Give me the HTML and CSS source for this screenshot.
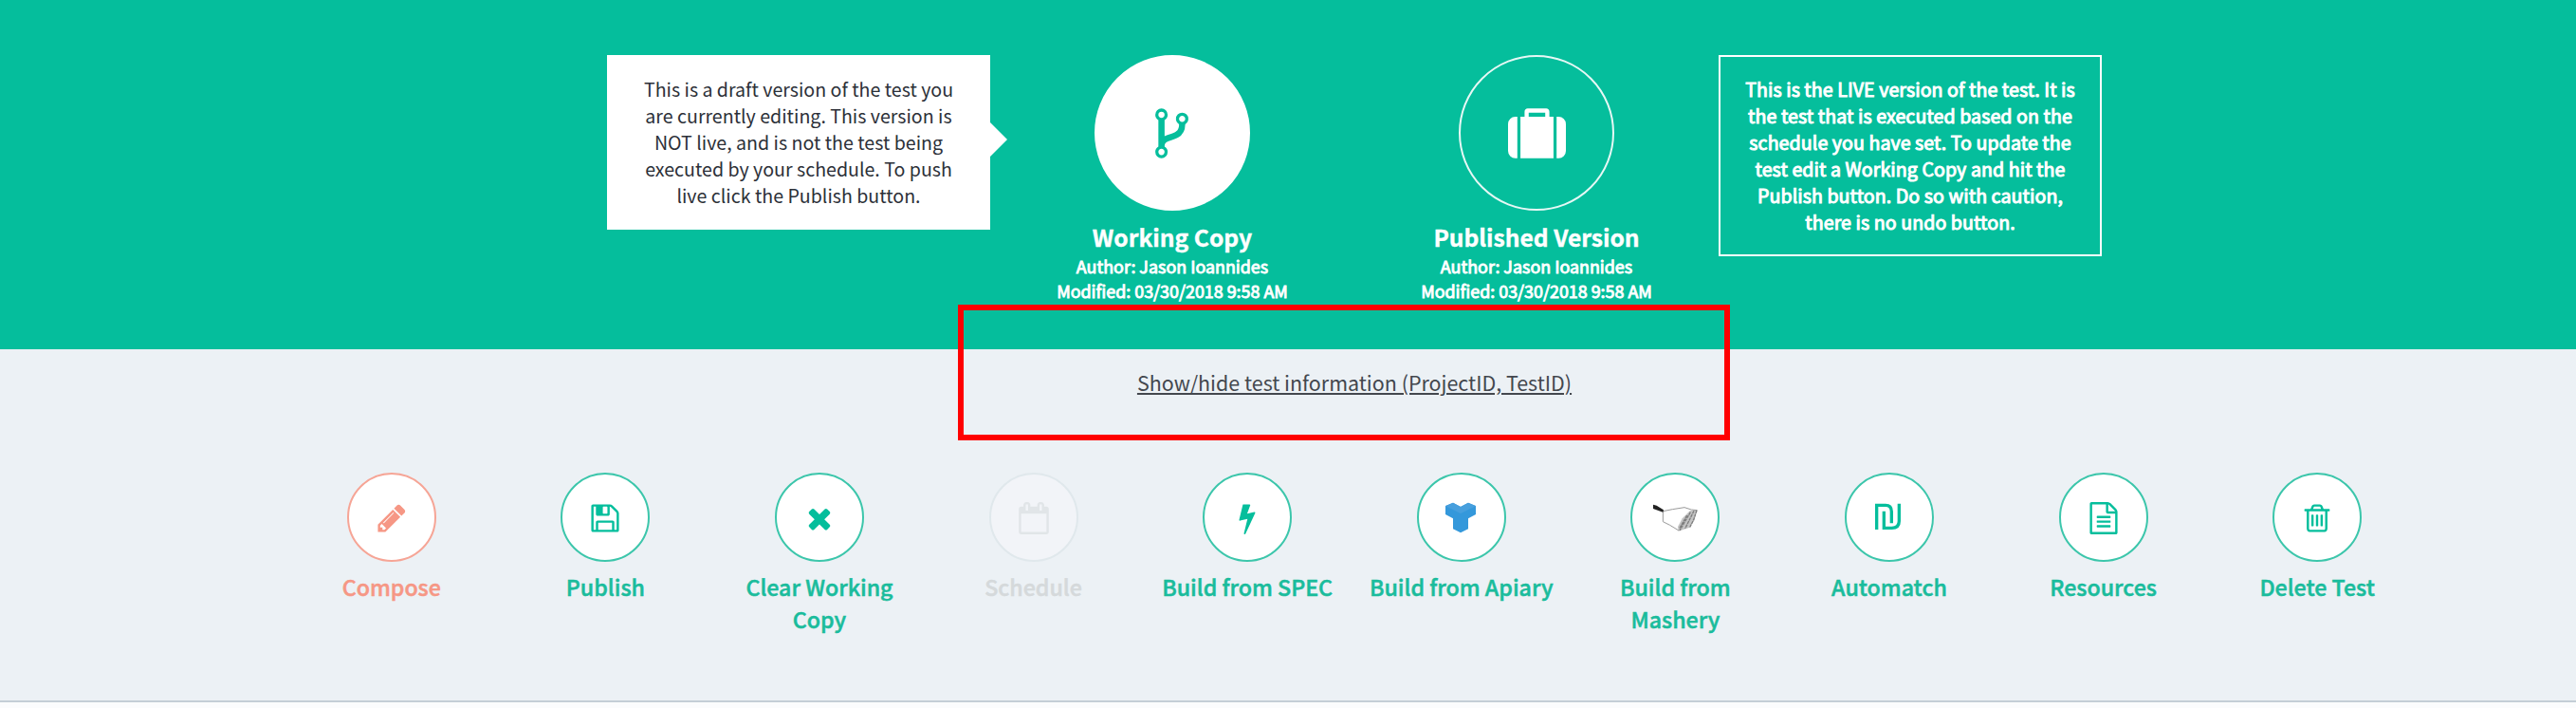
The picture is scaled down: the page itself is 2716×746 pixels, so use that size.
FILE: index.html
```
<!DOCTYPE html>
<html lang="en">
<head>
<meta charset="utf-8">
<title>Test versions</title>
<link rel="stylesheet" href="styles.css">
</head>
<body>
<header class="hero">
  <div class="note note-draft">This is a draft version of the test you<br>are currently editing. This version is<br>NOT live, and is not the test being<br>executed by your schedule. To push<br>live click the Publish button.</div>
  <div class="version">
    <div class="disc disc-solid"><svg class="icon-lg" viewBox="0 0 1792 1792"><path d="M672 1472q0-40-28-68t-68-28-68 28-28 68 28 68 68 28 68-28 28-68zm0-1152q0-40-28-68t-68-28-68 28-28 68 28 68 68 28 68-28 28-68zm640 128q0-40-28-68t-68-28-68 28-28 68 28 68 68 28 68-28 28-68zm96 0q0 52-26 96.500t-70 69.500q-2 287-226 414-67 38-203 81-128 40-169.500 71t-41.500 100v26q44 25 70 69.500t26 96.500q0 80-56 136t-136 56-136-56-56-136q0-52 26-96.500t70-69.500v-820q-44-25-70-69.500t-26-96.500q0-80 56-136t136-56 136 56 56 136q0 52-26 96.500t-70 69.500v497q54-26 154-57 55-17 87.500-29.500t70.500-31 59-39.500 40.500-51 28-69.500 8.500-91.500q-44-25-70-69.500t-26-96.500q0-80 56-136t136-56 136 56 56 136z"/></svg></div>
    <h2 class="version-name">Working Copy</h2>
    <p class="version-meta">Author: Jason Ioannides<br>Modified: 03/30/2018 9:58 AM</p>
  </div>
  <div class="version">
    <div class="disc"><svg class="icon-lg" viewBox="0 0 1792 1792"><path d="M640 384h512v-128h-512v128zm-352 0v1280h-64q-92 0-158-66t-66-158v-832q0-92 66-158t158-66h64zm1120 0v1280h-1024v-1280h128v-160q0-40 28-68t68-28h576q40 0 68 28t28 68v160h128zm384 224v832q0 92-66 158t-158 66h-64v-1280h64q92 0 158 66t66 158z"/></svg></div>
    <h2 class="version-name">Published Version</h2>
    <p class="version-meta">Author: Jason Ioannides<br>Modified: 03/30/2018 9:58 AM</p>
  </div>
  <div class="note note-live">This is the LIVE version of the test. It is<br>the test that is executed based on the<br>schedule you have set. To update the<br>test edit a Working Copy and hit the<br>Publish button. Do so with caution,<br>there is no undo button.</div>
</header>
<main class="panel">
  <a class="toggle">Show/hide test information (ProjectID, TestID)</a>
  <nav class="actions">
    <div class="action action-active">
      <div class="ring"><svg class="icon" viewBox="0 0 1792 1792"><path d="M491 1536l91-91-235-235-91 91v107h128v128h107zm523-928q0-22-22-22-10 0-17 7l-542 542q-7 7-7 17 0 22 22 22 10 0 17-7l542-542q7-7 7-17zm-54-192l416 416-832 832h-416v-416zm683 96q0 53-37 90l-166 166-416-416 166-165q36-38 90-38 53 0 91 38l235 234q37 39 37 91z"/></svg></div>
      <span class="label">Compose</span>
    </div>
    <div class="action">
      <div class="ring"><svg class="icon" viewBox="0 0 1792 1792"><path d="M512 1536h768v-384h-768v384zm896 0h128v-896q0-14-10-38.500t-20-34.500l-281-281q-10-10-34-20t-39-10v416q0 40-28 68t-68 28h-576q-40 0-68-28t-28-68v-416h-128v1280h128v-416q0-40 28-68t68-28h832q40 0 68 28t28 68v416zm-384-928v-320q0-13-9.500-22.500t-22.500-9.500h-192q-13 0-22.500 9.500t-9.500 22.500v320q0 13 9.500 22.500t22.500 9.500h192q13 0 22.500-9.500t9.500-22.500zm640 32v928q0 40-28 68t-68 28h-1344q-40 0-68-28t-28-68v-1344q0-40 28-68t68-28h928q40 0 88 20t76 48l280 280q28 28 48 76t20 88z"/></svg></div>
      <span class="label">Publish</span>
    </div>
    <div class="action">
      <div class="ring"><svg class="icon" viewBox="0 0 1792 1792"><path d="M1490 1322q0 40-28 68l-136 136q-28 28-68 28t-68-28l-294-294-294 294q-28 28-68 28t-68-28l-136-136q-28-28-28-68t28-68l294-294-294-294q-28-28-28-68t28-68l136-136q28-28 68-28t68 28l294 294 294-294q28-28 68-28t68 28l136 136q28 28 28 68t-28 68l-294 294 294 294q28 28 28 68z"/></svg></div>
      <span class="label">Clear Working Copy</span>
    </div>
    <div class="action action-disabled">
      <div class="ring"><svg class="icon" viewBox="0 0 1792 1792"><path d="M192 1664h1408v-1024h-1408v1024zm384-1216v-288q0-14-9-23t-23-9h-64q-14 0-23 9t-9 23v288q0 14 9 23t23 9h64q14 0 23-9t9-23zm768 0v-288q0-14-9-23t-23-9h-64q-14 0-23 9t-9 23v288q0 14 9 23t23 9h64q14 0 23-9t9-23zm384-64v1280q0 52-38 90t-90 38h-1408q-52 0-90-38t-38-90v-1280q0-52 38-90t90-38h128v-96q0-66 47-113t113-47h64q66 0 113 47t47 113v96h384v-96q0-66 47-113t113-47h64q66 0 113 47t47 113v96h128q52 0 90 38t38 90z"/></svg></div>
      <span class="label">Schedule</span>
    </div>
    <div class="action">
      <div class="ring"><svg class="icon" viewBox="0 0 1792 1792"><path d="M1333 566q18 20 7 44l-540 1157q-13 25-42 25-4 0-14-2-17-5-25.500-19t-4.500-30l197-808-406 101q-4 1-12 1-18 0-31-11-18-15-13-39l201-825q4-14 16-23t28-9h328q19 0 32 12.500t13 29.500q0 8-5 18l-171 463 396-98q8-2 12-2 19 0 34 15z"/></svg></div>
      <span class="label">Build from SPEC</span>
    </div>
    <div class="action">
      <div class="ring"><svg class="icon-wide" viewBox="0 0 270 180"><path fill="#3498db" d="M84 54l24-10 24 13 24-13 24 10v27l-24 13v33l-24 12-24-12v-33l-24-13z"/><path fill="#479fdd" d="M84 55l24-11 24 13 24-13 24 11-24 11-24 12-24-12z"/></svg></div>
      <span class="label">Build from Apiary</span>
    </div>
    <div class="action">
      <div class="ring"><svg class="icon-wide" viewBox="0 0 270 180"><path fill="#c4c4c4" d="M206 66l-10 34-14 22-36 12-2-14 14-26 24-24z"/><g fill="none" stroke-linejoin="round"><path stroke="#999" stroke-width="3" d="M97 71l30-6 38-6 22 7 18 2M97 71v33l22 11 28 17"/><path stroke="#7d7d7d" stroke-width="4" stroke-dasharray="10 2" d="M204 68l-10 30-12 24M195 70l-28 56M184 74l-34 58M173 84l-24 42"/></g><path fill="#222" d="M66 50l11 3 22 14-2 7-31-11z"/></svg></div>
      <span class="label">Build from Mashery</span>
    </div>
    <div class="action">
      <div class="ring"><svg class="icon-wide" viewBox="0 0 270 180"><g fill="none" stroke="currentColor" stroke-width="10"><path d="M95 129V52h28q19 0 19 20v37"/><path d="M118 71v53h25q23 0 23-22V47"/></g></svg></div>
      <span class="label">Automatch</span>
    </div>
    <div class="action">
      <div class="ring"><svg class="icon" viewBox="0 0 1792 1792"><path d="M1596 380q28 28 48 76t20 88v1152q0 40-28 68t-68 28h-1344q-40 0-68-28t-28-68v-1600q0-40 28-68t68-28h896q40 0 88 20t76 48zm-444-244v376h376q-10-29-22-41l-313-313q-12-12-41-22zm384 1528v-1024h-416q-40 0-68-28t-28-68v-416h-768v1536h1280zm-1024-864q0-14 9-23t23-9h704q14 0 23 9t9 23v64q0 14-9 23t-23 9h-704q-14 0-23-9t-9-23v-64zm736 224q14 0 23 9t9 23v64q0 14-9 23t-23 9h-704q-14 0-23-9t-9-23v-64q0-14 9-23t23-9h704zm0 256q14 0 23 9t9 23v64q0 14-9 23t-23 9h-704q-14 0-23-9t-9-23v-64q0-14 9-23t23-9h704z"/></svg></div>
      <span class="label">Resources</span>
    </div>
    <div class="action">
      <div class="ring"><svg class="icon" viewBox="0 0 1792 1792"><path d="M704 736v576q0 14-9 23t-23 9h-64q-14 0-23-9t-9-23v-576q0-14 9-23t23-9h64q14 0 23 9t9 23zm256 0v576q0 14-9 23t-23 9h-64q-14 0-23-9t-9-23v-576q0-14 9-23t23-9h64q14 0 23 9t9 23zm256 0v576q0 14-9 23t-23 9h-64q-14 0-23-9t-9-23v-576q0-14 9-23t23-9h64q14 0 23 9t9 23zm128 724v-948h-896v948q0 22 7 40.500t14.500 27 10.500 8.500h832q3 0 10.500-8.500t14.500-27 7-40.500zm-672-1076h448l-48-117q-7-9-17-11h-317q-10 2-17 11zm928 32v64q0 14-9 23t-23 9h-96v948q0 83-47 143.500t-113 60.500h-832q-66 0-113-58.500t-47-141.500v-952h-96q-14 0-23-9t-9-23v-64q0-14 9-23t23-9h309l70-167q15-37 54-63t79-26h320q40 0 79 26t54 63l70 167h309q14 0 23 9t9 23z"/></svg></div>
      <span class="label">Delete Test</span>
    </div>
  </nav>
</main>
<div class="highlight"></div>
</body>
</html>
```
FILE: styles.css
```
* { box-sizing: border-box; }

body {
  position: relative;
  margin: 0;
  height: 746px;
  overflow: hidden;
  background: #fbfcfd;
  font-family: "Noto Sans CJK SC", "Open Sans", sans-serif;
}

.hero {
  display: flex;
  align-items: flex-start;
  height: 368px;
  padding: 58px 0 0 640px;
  background: #05be9c;
  color: #fff;
}

.note {
  width: 404px;
  font-size: 19.6px;
  line-height: 28px;
  text-align: center;
  white-space: nowrap;
}

.note-draft {
  position: relative;
  padding: 22px 0;
  background: #fff;
  color: #2c3038;
}

.note-draft::after {
  content: "";
  position: absolute;
  left: 100%;
  top: 71px;
  border: solid transparent;
  border-width: 18px 0 18px 18px;
  border-left-color: #fff;
}

.note-live {
  padding: 20px 0;
  border: 2px solid #fff;
  letter-spacing: 0.08px;
  -webkit-text-stroke: 1px #fff;
}

.version {
  display: flex;
  flex-direction: column;
  align-items: center;
  width: 384px;
  text-align: center;
}

.disc {
  display: flex;
  align-items: center;
  justify-content: center;
  width: 164px;
  height: 164px;
  border: 2px solid #e6f8f5;
  border-radius: 50%;
}

.disc-solid {
  padding-right: 2px;
  background: #fff;
  border-color: #fff;
  color: #05be9c;
}

svg { display: block; fill: currentColor; }

.icon-lg { width: 61px; height: 61px; }

.version-name {
  margin: 10px 0 1px;
  font-size: 24.6px;
  line-height: 34px;
  font-weight: 700;
  -webkit-text-stroke: 0.4px #fff;
}

.version-meta {
  margin: 0;
  font-size: 17.9px;
  line-height: 26px;
  -webkit-text-stroke: 0.9px #fff;
}

.panel {
  display: flex;
  flex-direction: column;
  height: 372px;
  padding: 18px 160px 0 300px;
  background: #ecf1f5;
  border-bottom: 2px solid #c4ced6;
}

.toggle {
  align-self: center;
  margin-bottom: 78px;
  font-size: 21.46px;
  line-height: 34px;
  color: #43474e;
  text-decoration: underline;
  text-decoration-thickness: 2px;
  text-underline-offset: 2px;
}

.actions {
  display: grid;
  grid-template-columns: repeat(10, 225.6px);
}

.action {
  display: flex;
  flex-direction: column;
  align-items: center;
  padding: 0 12px;
  color: #1abc9c;
}

.ring {
  display: flex;
  align-items: center;
  justify-content: center;
  width: 94px;
  height: 94px;
  border: 2px solid #3cc6ab;
  border-radius: 50%;
  background: #fff;
  color: #05be9c;
}

.icon { width: 34px; height: 34px; margin-top: 2px; }
.icon-wide { width: 90px; height: 60px; }

.label {
  margin-top: 9px;
  font-size: 23.2px;
  line-height: 34px;
  font-weight: 500;
  text-align: center;
  -webkit-text-stroke: 0.5px currentColor;
}

.action-active { color: #f69785; }
.action-active .ring { color: #f69785; border-color: #f6a596; }

.action-disabled { color: #d5d9db; }
.action-disabled .ring {
  background: #f2f4f8;
  border-color: #e0e8ec;
  color: #e1e5e8;
}

.highlight {
  position: absolute;
  left: 1010px;
  top: 321px;
  width: 814px;
  height: 143px;
  border: 6px solid #f00;
}
```
